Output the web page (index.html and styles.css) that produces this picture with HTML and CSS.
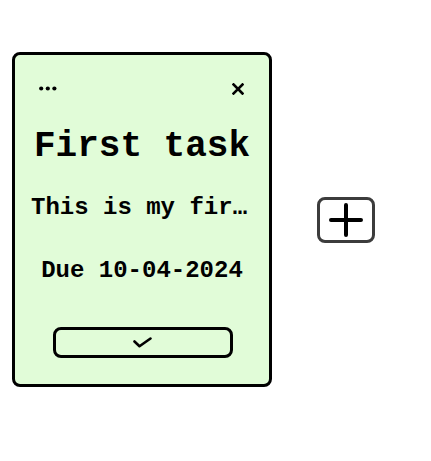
FILE: index.html
```html
<!DOCTYPE html>
<html>
<head>
<meta charset="utf-8">
<link rel="stylesheet" href="styles.css">
</head>
<body>
<div class="board">
  <div class="card">
    <div class="card-head">
      <button class="icon-btn dots" aria-label="More">
        <svg width="18" height="5" viewBox="0 0 18 5"><circle cx="2.2" cy="2.5" r="2.1"/><circle cx="8.8" cy="2.5" r="2.1"/><circle cx="15.4" cy="2.5" r="2.1"/></svg>
      </button>
      <button class="icon-btn close" aria-label="Close">
        <svg width="12" height="12" viewBox="0 0 12 12"><path d="M1.5 1.5 L10.5 10.5 M10.5 1.5 L1.5 10.5" stroke="#000" stroke-width="2.6" stroke-linecap="square" fill="none"/></svg>
      </button>
    </div>
    <h1 class="title">First task</h1>
    <p class="desc">This is my first task description</p>
    <p class="due">Due 10-04-2024</p>
    <button class="done-btn" aria-label="Done">
      <svg width="19" height="11" viewBox="0 0 19 11"><path d="M1.5 4.5 L6.5 9.2 L17.5 1.5" stroke="#000" stroke-width="2.6" fill="none" stroke-linecap="round" stroke-linejoin="round"/></svg>
    </button>
  </div>
  <button class="add-btn" aria-label="Add">
    <svg width="34" height="34" viewBox="0 0 34 34"><path d="M2 17 H32 M17 2 V32" stroke="#000" stroke-width="4" stroke-linecap="round" fill="none"/></svg>
  </button>
</div>
</body>
</html>
```
FILE: styles.css
```css
html, body {
  margin: 0;
  padding: 0;
  background: #fff;
}
body {
  font-family: "Liberation Mono", "Courier New", monospace;
  font-weight: bold;
  color: #000;
}
.board {
  display: flex;
  align-items: center;
  gap: 45px;
  padding: 52px 0 0 12px;
}
.card {
  box-sizing: border-box;
  width: 260px;
  height: 335px;
  border: 3px solid #000;
  border-radius: 8px;
  background: #e1fcd8;
  display: flex;
  flex-direction: column;
  align-items: center;
  padding: 21px 0 0 0;
}
.card-head {
  align-self: stretch;
  display: flex;
  justify-content: space-between;
  align-items: center;
  height: 24px;
  padding: 0 25px 0 24px;
}
.icon-btn {
  border: 0;
  background: none;
  padding: 0;
  margin: 0;
  display: flex;
  align-items: center;
  justify-content: center;
}
.close {
  margin-top: 2px;
}
.title {
  margin: 27px 0 0 0;
  font-size: 36px;
  line-height: 40px;
  font-weight: bold;
  text-align: center;
}
.desc {
  box-sizing: border-box;
  align-self: stretch;
  margin: 27px 0 0 0;
  padding: 0 16px;
  font-size: 24px;
  line-height: 28px;
  white-space: nowrap;
  overflow: hidden;
  text-overflow: ellipsis;
}
.due {
  margin: 35px 0 0 0;
  font-size: 24px;
  line-height: 28px;
  text-align: center;
}
.done-btn {
  box-sizing: border-box;
  margin: 42px 0 0 1px;
  width: 180px;
  height: 31px;
  border: 3px solid #000;
  border-radius: 8px;
  background: transparent;
  display: flex;
  align-items: center;
  justify-content: center;
  padding: 0;
}
.add-btn {
  box-sizing: border-box;
  width: 58px;
  height: 46px;
  border: 3px solid #3c3c3c;
  border-radius: 8px;
  background: #fff;
  display: flex;
  align-items: center;
  justify-content: center;
  padding: 0;
}
```
